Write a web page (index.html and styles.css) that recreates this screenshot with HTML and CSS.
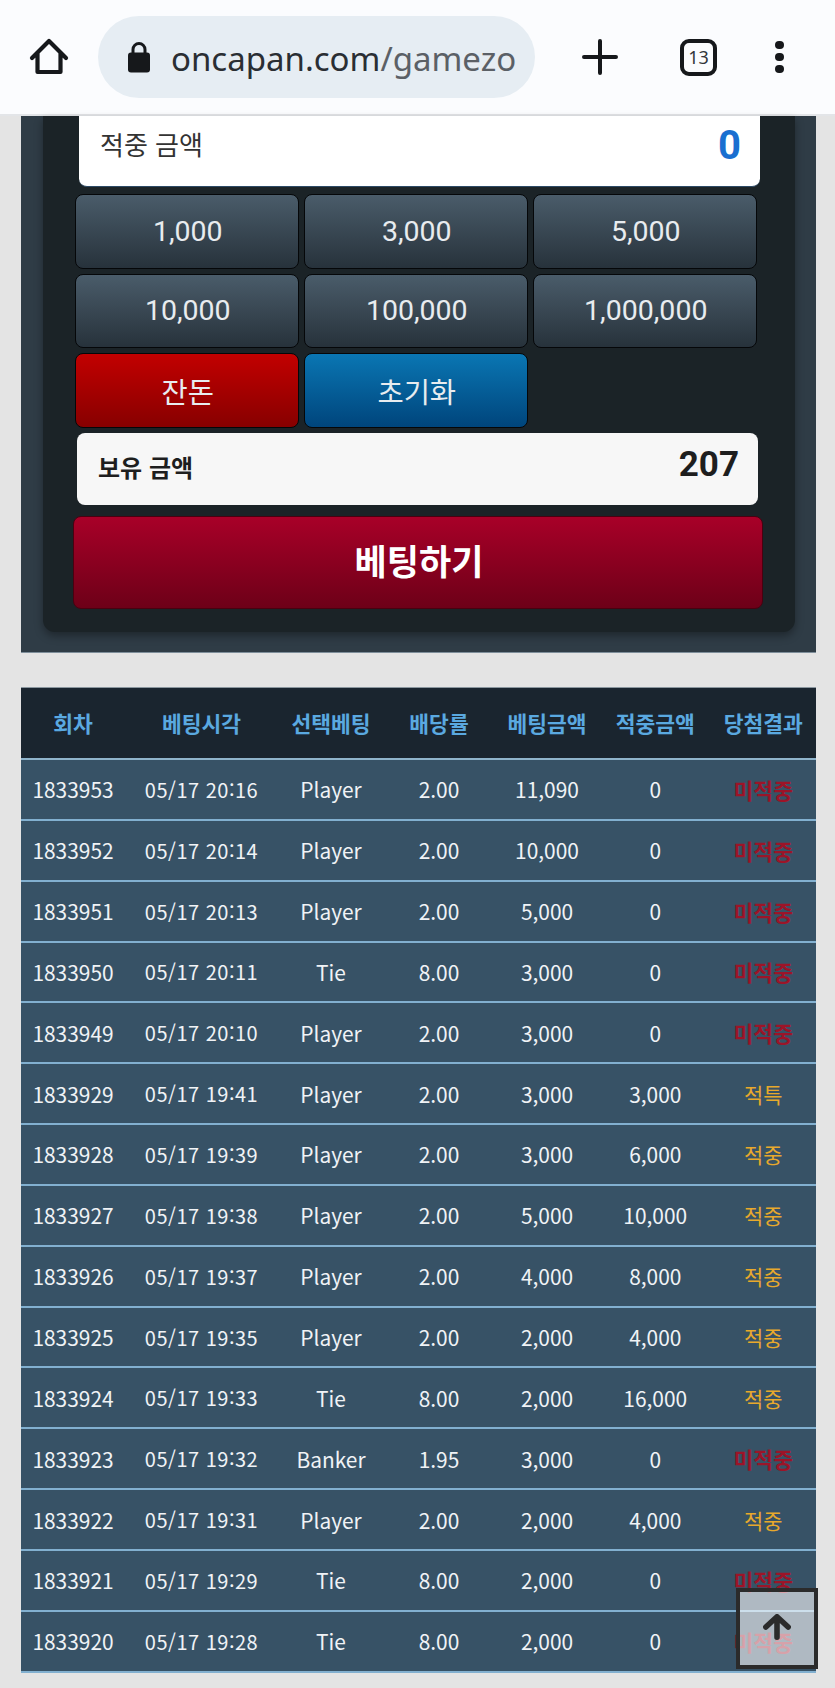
FILE: index.html
```html
<!DOCTYPE html>
<html lang="ko">
<head>
    <meta charset="UTF-8">
    <meta name="viewport" content="width=device-width, initial-scale=1.0">
    <title>oncapan.com/gamezone</title>
    <link rel="stylesheet" href="styles.css">
</head>
<body>
    <!-- browser toolbar -->
    <header class="toolbar">
        <svg class="home-icon" width="42" height="42" viewBox="0 0 42 42"><path d="M4 22 L21 5 L38 22 M9.5 17 V36 H32.5 V17" fill="none" stroke="#16181b" stroke-width="4.2" stroke-linecap="round" stroke-linejoin="round"/></svg>
        <div class="omnibox">
            <svg class="lock-icon" width="24" height="32" viewBox="0 0 24 32"><path d="M6 14 V8.5 a6 6 0 0 1 12 0 V14" fill="none" stroke="#16181b" stroke-width="3"/><rect x="1" y="11.5" width="22" height="20" rx="3" fill="#16181b"/></svg>
            <span class="url"><span class="url-host">oncapan.com</span>/gamezo</span>
        </div>
        <svg class="plus-icon" width="36" height="36" viewBox="0 0 36 36"><path d="M2 18 H34 M18 2 V34" stroke="#16181b" stroke-width="4" stroke-linecap="round"/></svg>
        <div class="tab-count">13</div>
        <div class="menu-dots"><i></i><i></i><i></i></div>
    </header>

    <section class="bet-panel">
        <div class="bet-inner">
            <div class="win-box">
                <span>적중 금액</span>
                <strong>0</strong>
            </div>
            <div class="amount-grid">
                <button class="amount-btn">1,000</button>
                <button class="amount-btn">3,000</button>
                <button class="amount-btn">5,000</button>
                <button class="amount-btn">10,000</button>
                <button class="amount-btn">100,000</button>
                <button class="amount-btn">1,000,000</button>
                <button class="amount-btn red">잔돈</button>
                <button class="amount-btn blue">초기화</button>
            </div>
            <div class="balance-box">
                <span>보유 금액</span>
                <strong>207</strong>
            </div>
            <button class="bet-btn">베팅하기</button>
        </div>
    </section>

    <table class="history">
        <colgroup>
            <col class="c1"><col class="c2"><col class="c3"><col class="c4"><col class="c5"><col class="c6"><col class="c7">
        </colgroup>
        <thead>
            <tr><th>회차</th><th>베팅시각</th><th>선택베팅</th><th>배당률</th><th>베팅금액</th><th>적중금액</th><th>당첨결과</th></tr>
        </thead>
        <tbody>
            <tr><td>1833953</td><td class="time">05/17 20:16</td><td>Player</td><td>2.00</td><td>11,090</td><td>0</td><td class="lose">미적중</td></tr>
            <tr><td>1833952</td><td class="time">05/17 20:14</td><td>Player</td><td>2.00</td><td>10,000</td><td>0</td><td class="lose">미적중</td></tr>
            <tr><td>1833951</td><td class="time">05/17 20:13</td><td>Player</td><td>2.00</td><td>5,000</td><td>0</td><td class="lose">미적중</td></tr>
            <tr><td>1833950</td><td class="time">05/17 20:11</td><td>Tie</td><td>8.00</td><td>3,000</td><td>0</td><td class="lose">미적중</td></tr>
            <tr><td>1833949</td><td class="time">05/17 20:10</td><td>Player</td><td>2.00</td><td>3,000</td><td>0</td><td class="lose">미적중</td></tr>
            <tr><td>1833929</td><td class="time">05/17 19:41</td><td>Player</td><td>2.00</td><td>3,000</td><td>3,000</td><td class="win">적특</td></tr>
            <tr><td>1833928</td><td class="time">05/17 19:39</td><td>Player</td><td>2.00</td><td>3,000</td><td>6,000</td><td class="win">적중</td></tr>
            <tr><td>1833927</td><td class="time">05/17 19:38</td><td>Player</td><td>2.00</td><td>5,000</td><td>10,000</td><td class="win">적중</td></tr>
            <tr><td>1833926</td><td class="time">05/17 19:37</td><td>Player</td><td>2.00</td><td>4,000</td><td>8,000</td><td class="win">적중</td></tr>
            <tr><td>1833925</td><td class="time">05/17 19:35</td><td>Player</td><td>2.00</td><td>2,000</td><td>4,000</td><td class="win">적중</td></tr>
            <tr><td>1833924</td><td class="time">05/17 19:33</td><td>Tie</td><td>8.00</td><td>2,000</td><td>16,000</td><td class="win">적중</td></tr>
            <tr><td>1833923</td><td class="time">05/17 19:32</td><td>Banker</td><td>1.95</td><td>3,000</td><td>0</td><td class="lose">미적중</td></tr>
            <tr><td>1833922</td><td class="time">05/17 19:31</td><td>Player</td><td>2.00</td><td>2,000</td><td>4,000</td><td class="win">적중</td></tr>
            <tr><td>1833921</td><td class="time">05/17 19:29</td><td>Tie</td><td>8.00</td><td>2,000</td><td>0</td><td class="lose">미적중</td></tr>
            <tr><td>1833920</td><td class="time">05/17 19:28</td><td>Tie</td><td>8.00</td><td>2,000</td><td>0</td><td class="lose">미적중</td></tr>
        </tbody>
    </table>

    <!-- floating scroll to top -->
    <a class="top-btn" href="#">
        <svg width="28" height="26" viewBox="0 0 30 28"><path d="M3 14 L15 3 L27 14 M15 4 V25" fill="none" stroke="#2b2b2b" stroke-width="6" stroke-linecap="round" stroke-linejoin="round"/></svg>
    </a>
</body>
</html>
```
FILE: styles.css
```css
* {
    padding: 0;
    margin: 0;
    box-sizing: border-box;
}
body {
    position: relative;
    width: 835px;
    height: 1688px;
    overflow: hidden;
    background-color: #e4e4e4;
    font-family: "Noto Sans CJK KR", "Noto Sans", sans-serif;
}

/* toolbar */
.toolbar {
    display: flex;
    align-items: center;
    height: 116px;
    background-color: #fbfcfe;
    border-bottom: 2px solid #e3e5e8;
    padding-left: 28px;
}
.omnibox {
    display: flex;
    align-items: center;
    width: 437px;
    height: 82px;
    margin-left: 28px;
    padding-left: 29px;
    border-radius: 41px;
    background-color: #e6edf3;
}
.url {
    margin-left: 20px;
    margin-top: 2px;
    font-family: "Noto Sans", sans-serif;
    font-size: 33px;
    line-height: 1;
    color: #5b6066;
    white-space: nowrap;
}
.url-host {
    color: #2a2e33;
}
.plus-icon {
    margin-left: 47px;
}
.tab-count {
    width: 37px;
    height: 37px;
    margin-left: 62px;
    border: 4px solid #16181b;
    border-radius: 9px;
    font-family: "Noto Sans", sans-serif;
    font-size: 18px;
    line-height: 29px;
    text-align: center;
    color: #33363a;
}
.menu-dots {
    display: flex;
    flex-direction: column;
    gap: 3.5px;
    margin-left: 58px;
}
.menu-dots i {
    width: 8.5px;
    height: 8.5px;
    border-radius: 50%;
    background-color: #16181b;
}

/* betting panel */
.bet-panel {
    width: 795px;
    margin-left: 21px;
    padding: 0 21px 20px 22px;
    background-color: #2f3c46;
    border-bottom: 1px solid #7e8e9a;
}
.bet-inner {
    padding: 0 32px 23px 30px;
    background-color: #1b2327;
    border-radius: 0 0 12px 12px;
    box-shadow: 0 4px 8px rgba(0,0,0,0.35);
}
.win-box {
    display: flex;
    justify-content: space-between;
    height: 71px;
    margin: 0 3px 0 6px;
    padding: 0 19px 0 21px;
    background-color: #fff;
    border-bottom: 1px solid #2d4a66;
    border-radius: 0 0 8px 8px;
    color: #333;
    font-size: 26px;
}
.win-box span {
    line-height: 55px;
}
.win-box strong {
    font-family: Roboto, sans-serif;
    font-size: 40px;
    line-height: 60px;
    color: #1a6fd0;
}
.amount-grid {
    display: grid;
    grid-template-columns: repeat(3, 223.5px);
    grid-auto-rows: 74.5px;
    column-gap: 5.5px;
    row-gap: 5px;
    margin: 7px 5px 0 2px;
}
.amount-btn {
    border: 1.5px solid #050709;
    border-radius: 8px;
    background: linear-gradient(#4a5c6a, #27323b);
    color: #e8ecef;
    font-family: Roboto, "Noto Sans CJK KR", sans-serif;
    font-size: 28.5px;
    padding-left: 2px;
}
.amount-btn.red {
    background: linear-gradient(#c20000, #870000);
}
.amount-btn.blue {
    background: linear-gradient(#0a76b3, #00457c);
}
.balance-box {
    display: flex;
    justify-content: space-between;
    align-items: center;
    height: 72px;
    margin: 5px 5px 0 4px;
    padding: 0 19px 0 21px;
    background-color: #f7f7f7;
    border-radius: 8px;
    color: #1e1e1e;
}
.balance-box span {
    font-size: 24px;
    font-weight: bold;
    margin-top: -4px;
}
.balance-box strong {
    font-family: Roboto, sans-serif;
    font-size: 35px;
    line-height: 1;
    margin-top: -8px;
}
.bet-btn {
    display: block;
    width: 100%;
    height: 93px;
    margin-top: 11px;
    border: 1px solid #4a0010;
    border-radius: 8px;
    background: linear-gradient(#a80028, #6d0018);
    color: #fff;
    font-family: "Noto Sans CJK KR", sans-serif;
    font-size: 35px;
    font-weight: bold;
    padding: 0 0 6px 2px;
}

/* history table */
.history {
    width: 795px;
    margin: 34px 0 0 21px;
    table-layout: fixed;
    border-collapse: collapse;
    font-size: 20.9px;
    text-align: center;
}
.c1 { width: 104px; }
.c2 { width: 153px; }
.c3 { width: 106px; }
.c4 { width: 110px; }
.c5 { width: 106px; }
.c6 { width: 110.5px; }
.c7 { width: 105.5px; }
.history th {
    height: 72px;
    background-color: #1a252f;
    border-top: 1px solid #8b979f;
    border-bottom: 2px solid #8fb4cc;
    color: #5aa9e0;
    font-size: 21.5px;
    font-weight: bold;
}
.history td {
    height: 60.85px;
    padding: 0;
    background-color: #375266;
    border-bottom: 2px solid #82b0d0;
    color: #f0f3f6;
    white-space: nowrap;
}
.history td.time {
    font-size: 20px;
    letter-spacing: 0.5px;
}
.history td.lose {
    color: #9c1428;
    font-size: 21.5px;
    font-weight: bold;
}
.history td.win {
    color: #e8a92c;
}

/* floating button */
.top-btn {
    position: absolute;
    left: 736px;
    top: 1588px;
    display: flex;
    justify-content: center;
    align-items: center;
    width: 82px;
    height: 81px;
    padding-bottom: 4px;
    border: 4px solid #2b2b2b;
    background-color: rgba(255,255,255,0.6);
}
```
